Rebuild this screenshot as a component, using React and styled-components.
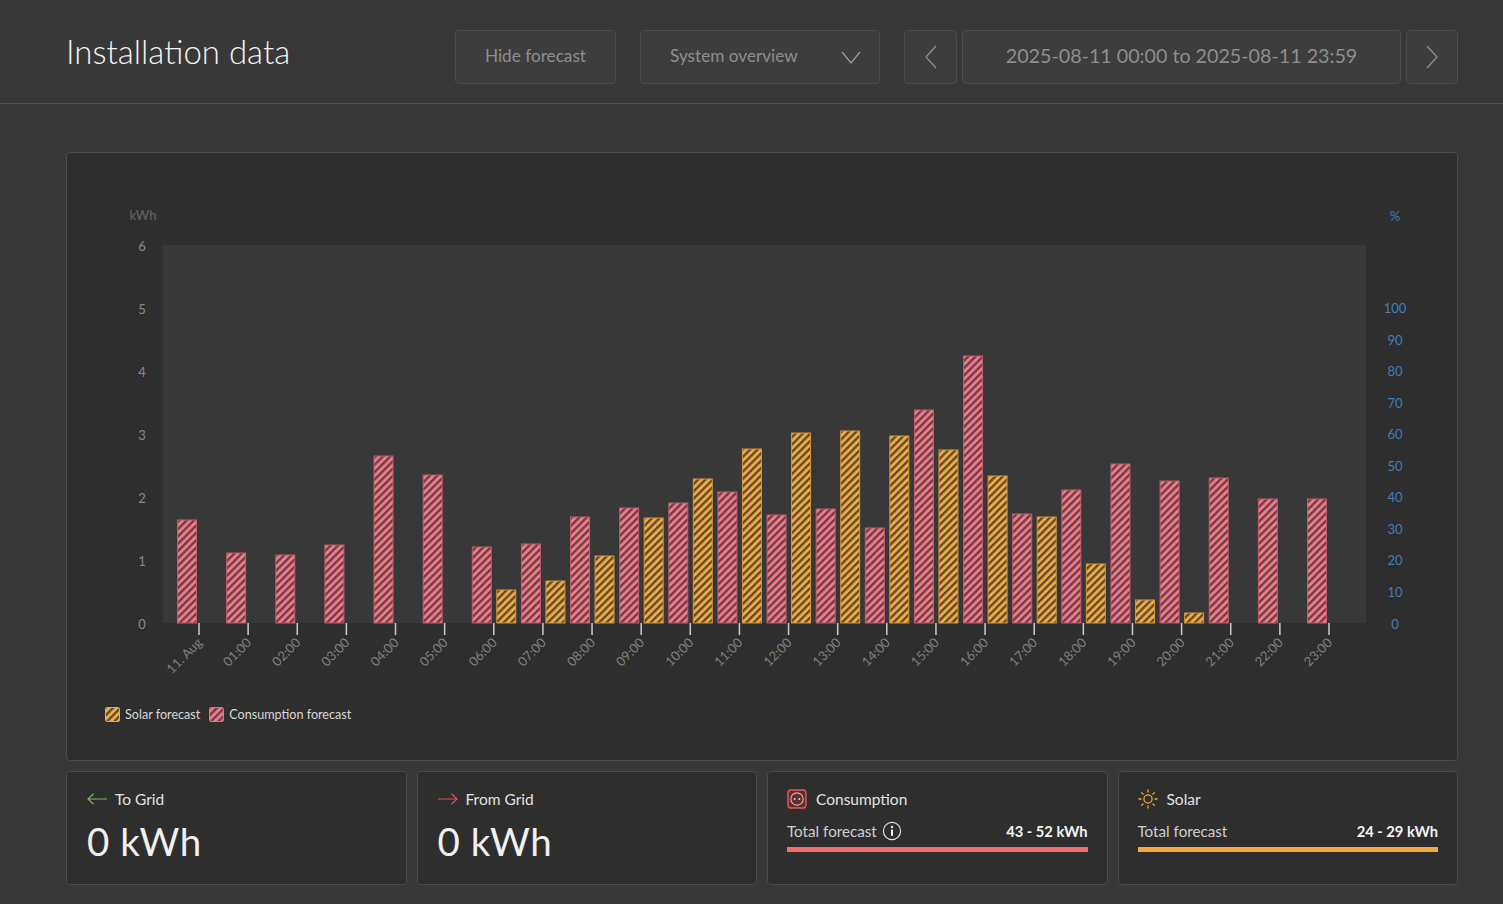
import React from 'react';
import styled, { createGlobalStyle } from 'styled-components';

const GlobalStyle = createGlobalStyle`
  html, body {
    margin: 0;
    padding: 0;
    background: #383838;
    font-family: 'Lato', 'Open Sans', sans-serif;
  }
  * { box-sizing: border-box; }
`;

const RED = '#f46e6e';
const ORANGE = '#f2a83b';

// top y of each bar, read per hour
const consumption = [520, 553, 555, 545, 456, 475, 547, 544, 517, 508, 503, 492, 515, 509, 528, 410, 356, 514, 490, 464, 481, 478, 499, 499];
const solar = { 6: 590, 7: 581, 8: 556, 9: 518, 10: 479, 11: 449, 12: 433, 13: 431, 14: 436, 15: 450, 16: 476, 17: 517, 18: 564, 19: 600, 20: 613 };

const hours = ['11. Aug', ...Array.from({ length: 23 }, (_, i) => `${String(i + 1).padStart(2, '0')}:00`)];
const leftTicks = [0, 1, 2, 3, 4, 5, 6];
const rightTicks = [0, 10, 20, 30, 40, 50, 60, 70, 80, 90, 100];

// svg sits at page x 67, y 153
const OX = 67;
const OY = 153;
const BASE = 623;
const tickX = i => 199 + i * 49.13 - OX;

const Page = styled.div`
  width: 1503px;
  height: 904px;
  overflow: hidden;
  display: flex;
  flex-direction: column;
`;

const Header = styled.header`
  height: 104px;
  border-bottom: 1px solid #525252;
  padding: 30px 45px 0 66px;
  display: flex;
  align-items: flex-start;
`;

const Title = styled.h1`
  margin: 0;
  flex: 1;
  font-size: 33px;
  line-height: 43px;
  font-weight: 300;
  color: #f4f4f4;
`;

const Control = styled.div`
  height: 54px;
  width: ${p => p.$w}px;
  margin-left: ${p => p.$ml}px;
  background: #3d3d3d;
  border: 1px solid #4c4c4c;
  border-radius: 4px;
  display: flex;
  align-items: center;
  justify-content: ${p => p.$between ? 'space-between' : 'center'};
  padding: ${p => p.$between ? '0 18px 0 29px' : '0'};
  color: #8e8e8e;
  font-size: ${p => p.$big ? 19.7 : 17.2}px;
  font-weight: 400;
`;

const ControlLabel = styled.span`
  position: relative;
  top: -2px;
`;

const Content = styled.main`
  padding: 48px 45px 0 66px;
  display: flex;
  flex-direction: column;
  gap: 10px;
`;

const ChartCard = styled.section`
  height: 609px;
  background: #2e2e2e;
  border: 1px solid #4c4c4c;
  border-radius: 4px;
  display: flex;
  flex-direction: column;
`;

const ChartSvg = styled.svg`
  display: block;
  flex: none;
`;

const AxisText = styled.text`
  font-family: 'Lato', sans-serif;
  font-size: 13px;
  fill: ${p => p.$fill};
`;

const Legend = styled.div`
  display: flex;
  align-items: center;
  padding: 0 0 0 38px;
  margin-top: -1px;
  gap: 9px;
`;

const LegendItem = styled.div`
  display: flex;
  align-items: center;
  gap: 5px;
  font-size: 12.6px;
  color: #d8d8d8;
`;

const CardRow = styled.div`
  display: grid;
  grid-template-columns: repeat(4, 1fr);
  gap: 10px;
`;

const StatCard = styled.div`
  height: 114px;
  background: #2e2e2e;
  border: 1px solid #4c4c4c;
  border-radius: 4px;
  padding: 15px ${p => p.$tight ? 19 : 20}px 0;
`;

const CardTitle = styled.div`
  display: flex;
  align-items: center;
  gap: ${p => p.$gap || 8}px;
  height: 24px;
  font-size: 15.5px;
  color: #e2e2e2;
`;

const BigValue = styled.div`
  margin-top: 6px;
  font-size: 38.5px;
  line-height: 48px;
  color: #f0f0f0;
  letter-spacing: 0.5px;
`;

const ForecastRow = styled.div`
  margin-top: 10px;
  display: flex;
  align-items: center;
  justify-content: space-between;
  height: 20px;
  font-size: 15.2px;
  color: #cfcfcf;
`;

const ForecastLabel = styled.span`
  display: flex;
  align-items: center;
  gap: 5px;
`;

const ForecastValue = styled.b`
  font-weight: 700;
  font-size: 14.7px;
  color: #f4f4f4;
`;

const Bar = styled.div`
  height: 5px;
  margin-top: 6px;
  background: ${p => p.$color};
`;

const Chevron = ({ dir, w = 14, h = 24 }) => {
  const d = {
    left: 'M12 1 L2 12 L12 23',
    right: 'M2 1 L12 12 L2 23'
  }[dir];
  return (
    <svg width={w} height={h} viewBox="0 0 14 24" fill="none" stroke="#8e8e8e" strokeWidth="1.3">
      <path d={d} />
    </svg>
  );
};

const ChevronDown = () => (
  <svg width="20" height="13" viewBox="0 0 20 13" fill="none" stroke="#9a9a9a" strokeWidth="1.3">
    <path d="M1 1 L10 12 L19 1" />
  </svg>
);

const Arrow = ({ color, left }) => (
  <svg width="20" height="12" viewBox="0 0 20 12" fill="none" stroke={color} strokeWidth="1.2">
    <path d={left ? 'M20 6 H1 M6.5 .8 L1 6 L6.5 11.2' : 'M0 6 H19 M13.5 .8 L19 6 L13.5 11.2'} />
  </svg>
);

const SocketIcon = () => (
  <svg width="20" height="20" viewBox="0 0 20 20">
    <rect x="1" y="1" width="18" height="18" rx="3" fill="#5c2f31" stroke="#e8565a" strokeWidth="1.4" />
    <circle cx="10" cy="10" r="6.2" fill="none" stroke="#e8a0a0" strokeWidth="1.2" />
    <circle cx="7.7" cy="10" r="1" fill="#f0c8c8" />
    <circle cx="12.3" cy="10" r="1" fill="#f0c8c8" />
  </svg>
);

const SunIcon = () => (
  <svg width="20" height="20" viewBox="0 0 20 20" fill="none" stroke={ORANGE} strokeWidth="1.3" strokeLinecap="round">
    <circle cx="10" cy="10" r="4.1" />
    <path d="M10 1 V3 M10 17 V19 M1 10 H3 M17 10 H19 M3.6 3.6 L5 5 M15 15 L16.4 16.4 M3.6 16.4 L5 15 M15 5 L16.4 3.6" />
  </svg>
);

const InfoIcon = () => (
  <svg width="20" height="20" viewBox="0 0 20 20" fill="none">
    <circle cx="10" cy="10" r="8.6" stroke="#e0e0e0" strokeWidth="1.2" />
    <circle cx="10" cy="6" r="1.2" fill="#f0f0f0" />
    <rect x="9" y="8.6" width="2" height="6.2" fill="#f0f0f0" />
  </svg>
);

const Swatch = ({ id, color }) => (
  <svg width="15" height="15" viewBox="0 0 15 15">
    <rect x="0.5" y="0.5" width="14" height="14" rx="1.5" fill={`url(#${id})`} stroke={color} />
  </svg>
);

const StripeDefs = () => (
  <defs>
    {[['hatchRed', '#ef7b88', '#6a3d47'], ['hatchOrange', '#eeaa4a', '#5f4a24']].map(([id, color, dark]) => (
      <pattern key={id} id={id} width="5.2" height="5.2" patternUnits="userSpaceOnUse" patternTransform="rotate(45)">
        <rect width="5.2" height="5.2" fill={color} />
        <rect width="2.3" height="5.2" fill={dark} />
      </pattern>
    ))}
  </defs>
);

const Chart = () => (
  <ChartSvg width="1390" height="555" viewBox="0 0 1390 555">
    <StripeDefs />
    <rect x={163 - OX} y={245 - OY} width={1203} height={BASE - 245} fill="#383838" />

    <AxisText x={143 - OX} y={67} textAnchor="middle" $fill="#666666">kWh</AxisText>
    <AxisText x={1395 - OX} y={68} textAnchor="middle" $fill="#3f7fbd">%</AxisText>

    {leftTicks.map(v => (
      <AxisText key={v} x={142 - OX} y={BASE + 5.5 - OY - v * 63} textAnchor="middle" $fill="#8a8a8a">{v}</AxisText>
    ))}
    {rightTicks.map(v => (
      <AxisText key={v} x={1395 - OX} y={BASE + 5.5 - OY - v * 3.155} textAnchor="middle" $fill="#3f7fbd">{v}</AxisText>
    ))}

    {consumption.map((top, i) => (
      <rect key={i} x={tickX(i) - 21.5} y={top - OY} width={19} height={BASE - top} fill="url(#hatchRed)" stroke="#c25c6c" strokeWidth="1" />
    ))}
    {Object.entries(solar).map(([i, top]) => (
      <rect key={i} x={tickX(+i) + 3} y={top - OY} width={19} height={BASE - top} fill="url(#hatchOrange)" stroke="#d3953a" strokeWidth="1" />
    ))}

    {hours.map((label, i) => (
      <g key={label}>
        <rect x={tickX(i) - 0.75} y={BASE - OY} width={1.5} height={12} fill="#c8ccd4" />
        <AxisText
          x={tickX(i) + 4}
          y={BASE + 20.5 - OY}
          textAnchor="end"
          transform={`rotate(-45 ${tickX(i) + 4} ${BASE + 20.5 - OY})`}
          $fill="#808080"
        >
          {label}
        </AxisText>
      </g>
    ))}
  </ChartSvg>
);

export default function App() {
  return (
    <Page>
      <GlobalStyle />
      <Header>
        <Title>Installation data</Title>
        <Control $w={161}><ControlLabel>Hide forecast</ControlLabel></Control>
        <Control $w={240} $ml={24} $between><ControlLabel>System overview</ControlLabel><ChevronDown /></Control>
        <Control $w={53} $ml={24}><Chevron dir="left" /></Control>
        <Control $w={439} $ml={5} $big><ControlLabel>2025-08-11 00:00 to 2025-08-11 23:59</ControlLabel></Control>
        <Control $w={52} $ml={5}><Chevron dir="right" /></Control>
      </Header>
      <Content>
        <ChartCard>
          <Chart />
          <Legend>
            <LegendItem><Swatch id="hatchOrange" color={ORANGE} />Solar forecast</LegendItem>
            <LegendItem><Swatch id="hatchRed" color={RED} />Consumption forecast</LegendItem>
          </Legend>
        </ChartCard>
        <CardRow>
          <StatCard>
            <CardTitle><Arrow color="#7ab55c" left />To Grid</CardTitle>
            <BigValue>0 kWh</BigValue>
          </StatCard>
          <StatCard>
            <CardTitle><Arrow color="#e0504e" />From Grid</CardTitle>
            <BigValue>0 kWh</BigValue>
          </StatCard>
          <StatCard $tight>
            <CardTitle $gap={9}><SocketIcon />Consumption</CardTitle>
            <ForecastRow>
              <ForecastLabel>Total forecast <InfoIcon /></ForecastLabel>
              <ForecastValue>43 - 52 kWh</ForecastValue>
            </ForecastRow>
            <Bar $color={RED} />
          </StatCard>
          <StatCard $tight>
            <CardTitle $gap={9}><SunIcon />Solar</CardTitle>
            <ForecastRow>
              <ForecastLabel>Total forecast</ForecastLabel>
              <ForecastValue>24 - 29 kWh</ForecastValue>
            </ForecastRow>
            <Bar $color={ORANGE} />
          </StatCard>
        </CardRow>
      </Content>
    </Page>
  );
}
